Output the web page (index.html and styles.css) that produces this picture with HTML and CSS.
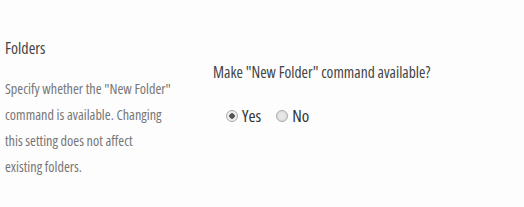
FILE: index.html
```html
<!DOCTYPE html>
<html lang="en">
<head>
	<meta charset="UTF-8">
	<title>Folders</title>
	<link rel="stylesheet" href="styles.css">
</head>
<body>
	<div class="section">
		<div class="info">
			<h3 class="title">Folders</h3>
			<p class="desc">Specify whether the "New Folder"<br>command is available. Changing<br>this setting does not affect<br>existing folders.</p>
		</div>
		<div class="field">
			<div class="question">Make "New Folder" command available?</div>
			<div class="choices">
				<label class="choice"><span class="radio checked"></span>Yes</label>
				<label class="choice"><span class="radio"></span>No</label>
			</div>
		</div>
	</div>
</body>
</html>
```

FILE: styles.css
```css
*{
	padding: 0;
	margin: 0;
}
body{
	background: #fdfdfd;
	font-family: "Open Sans", "Noto Sans", sans-serif;
	font-stretch: 75%;
	color: #444;
}
.section{
	display: flex;
	padding: 38px 0 0 5px;
}
.info{
	width: 172px;
}
.title{
	font-size: 16px;
	font-weight: normal;
	color: #444;
	line-height: 20px;
}
.desc{
	margin-top: 18px;
	font-size: 14.2px;
	line-height: 26px;
	color: #777;
	white-space: nowrap;
}
.field{
	margin-left: 36px;
	padding-top: 24px;
}
.question{
	font-size: 15.5px;
	line-height: 20px;
}
.choices{
	display: flex;
	gap: 15px;
	margin-top: 24px;
	padding-left: 13px;
	font-size: 17px;
	line-height: 20px;
	color: #333;
}
.choice{
	display: flex;
	align-items: center;
	gap: 4px;
}
.radio{
	width: 12px;
	height: 12px;
	border-radius: 50%;
	border: 1px solid #aaa;
	background: radial-gradient(circle, #e6e6e6 40%, #d2d2d2 100%);
	box-sizing: border-box;
}
.radio.checked{
	background: radial-gradient(circle, #555 0 2.5px, #eee 3px);
}
```
